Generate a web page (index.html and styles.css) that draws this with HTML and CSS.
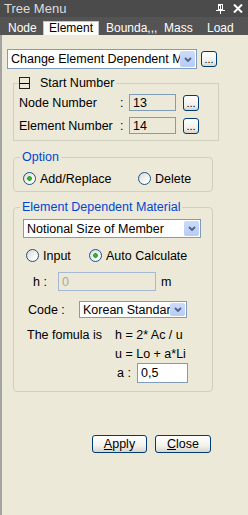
FILE: index.html
```html
<!DOCTYPE html>
<html lang="en">
<head>
    <meta charset="UTF-8">
    <title>Tree Menu</title>
    <link rel="stylesheet" href="styles.css">
</head>
<body>
<div class="titlebar">
    <span class="title">Tree Menu</span>
    <span class="tools">
        <svg width="9" height="10" viewBox="0 0 9 10" shape-rendering="crispEdges">
            <path d="M2.5 0.5h4v5h-4z M3 1h1v4" fill="none" stroke="#fff"/>
            <path d="M0 6.5h9 M4.5 6v4" stroke="#fff"/>
        </svg>
        <svg width="10" height="9" viewBox="0 0 10 9">
            <path d="M1 0.5l8 8 M9 0.5l-8 8" stroke="#fff" stroke-width="2"/>
        </svg>
    </span>
</div>
<div class="tabs">
    <span class="tab node">Node</span>
    <span class="tab elem active">Element</span>
    <span class="tab bound">Bounda,,,</span>
    <span class="tab mass">Mass</span>
    <span class="tab load">Load</span>
</div>

<div class="content">
    <div class="cmd-row">
        <div class="combo cmd">
            <span class="combo-text">Change Element Dependent Material</span>
            <span class="arrow"><svg width="8" height="5" viewBox="0 0 8 5"><path d="M1 1l3 3 3-3" fill="none" stroke="#4d6185" stroke-width="1.8"/></svg></span>
        </div>
        <button class="dots">...</button>
    </div>

    <fieldset class="group start">
        <legend><span class="minus"></span>Start Number</legend>
        <div class="num-row first">
            <span class="num-label">Node Number</span>
            <span class="colon">:</span>
            <input class="num" value="13" readonly>
            <button class="dots">...</button>
        </div>
        <div class="num-row">
            <span class="num-label">Element Number</span>
            <span class="colon">:</span>
            <input class="num" value="14" readonly>
            <button class="dots">...</button>
        </div>
    </fieldset>

    <fieldset class="group round option">
        <legend>Option</legend>
        <div class="radio-row">
            <span class="choice add"><span class="radio on"></span>Add/Replace</span>
            <span class="choice"><span class="radio"></span>Delete</span>
        </div>
    </fieldset>

    <fieldset class="group round material">
        <legend>Element Dependent Material</legend>
        <div class="combo member">
            <span class="combo-text">Notional Size of Member</span>
            <span class="arrow"><svg width="8" height="5" viewBox="0 0 8 5"><path d="M1 1l3 3 3-3" fill="none" stroke="#4d6185" stroke-width="1.8"/></svg></span>
        </div>
        <div class="radio-row calc">
            <span class="choice input"><span class="radio"></span>Input</span>
            <span class="choice"><span class="radio on"></span>Auto Calculate</span>
        </div>
        <div class="h-row">
            <span class="h-label">h :</span>
            <input class="h-input" value="0" disabled>
            <span class="unit">m</span>
        </div>
        <div class="code-row">
            <span class="code-label">Code :</span>
            <div class="combo code">
                <span class="combo-text">Korean Standard</span>
                <span class="arrow"><svg width="8" height="5" viewBox="0 0 8 5"><path d="M1 1l3 3 3-3" fill="none" stroke="#4d6185" stroke-width="1.8"/></svg></span>
            </div>
        </div>
        <div class="formula first">
            <span class="formula-label">The fomula is</span>
            <span>h = 2* Ac / u</span>
        </div>
        <div class="formula second">
            <span class="formula-label"></span>
            <span>u = Lo + a*Li</span>
        </div>
        <div class="a-row">
            <span class="a-label">a :</span>
            <input class="a-input" value="0,5">
        </div>
    </fieldset>

    <div class="actions">
        <button class="btn apply"><u>A</u>pply</button>
        <button class="btn close"><u>C</u>lose</button>
    </div>
</div>
</body>
</html>
```

FILE: styles.css
```css
* {
    box-sizing: border-box;
}

body {
    margin: 0;
    width: 248px;
    height: 515px;
    overflow: hidden;
    background: #ece9d8;
    font-family: "Liberation Sans", Arial, sans-serif;
    font-size: 12.5px;
    color: #000;
}

.titlebar {
    height: 17px;
    background: #4b4b4b;
    color: #dcdcdc;
    display: flex;
    align-items: center;
    padding-left: 4px;
    font-size: 13px;
}

.title {
    flex: 1;
}

.tools {
    display: flex;
    align-items: center;
    gap: 8px;
    padding-right: 5px;
}

.tabs {
    height: 18px;
    background: #545454;
    display: flex;
    align-items: flex-end;
    padding-left: 2px;
}

.tab {
    height: 14px;
    line-height: 14px;
    color: #fff;
    font-size: 12px;
    padding-left: 6px;
    white-space: nowrap;
}

.tab.node { width: 41px; }
.tab.elem { width: 56px; }
.tab.bound { width: 59px; padding-left: 7px; }
.tab.mass { width: 43px; }
.tab.load { flex: 1; }

.tab.active {
    background: #fbfbf8;
    color: #000;
    border: 1px solid #c4c4c4;
    border-bottom: none;
    padding-left: 5px;
    line-height: 13px;
}

.content {
    height: 480px;
    border-left: 2px solid #a3a3a3;
    padding: 14px 0 0 5px;
}

/* combo boxes */
.combo {
    display: flex;
    align-items: stretch;
    background: #fff;
    border: 1px solid #7f9db9;
    padding: 1px;
}

.combo-text {
    flex: 1;
    overflow: hidden;
    white-space: nowrap;
    padding-left: 2px;
    display: flex;
    align-items: center;
}

.arrow {
    width: 15px;
    background: linear-gradient(#cddbfb, #b7cbf5);
    border-radius: 2px;
    display: flex;
    align-items: center;
    justify-content: center;
}

.cmd-row {
    display: flex;
    align-items: center;
    gap: 4px;
}

.combo.cmd {
    width: 190px;
    height: 20px;
}

/* small xp buttons */
button {
    font-family: inherit;
    font-size: inherit;
    color: #000;
    cursor: default;
}

.dots {
    width: 16px;
    height: 16px;
    padding: 0 0 1px;
    border: 1px solid #003c74;
    border-radius: 3px;
    background: linear-gradient(#ffffff, #f0efe8 70%, #d8d4c8);
    font-size: 11px;
    line-height: 1;
    display: flex;
    align-items: flex-end;
    justify-content: center;
}

/* group boxes */
fieldset.group {
    margin: 0 0 0 6px;
    padding: 0;
    border: 1px solid #d0d0bf;
    min-width: 0;
}

fieldset.group legend {
    line-height: 14px;
    height: 14px;
    padding: 0 2px;
    margin-left: 6px;
    color: #0046d5;
}

fieldset.round {
    border-radius: 4px;
}

.start {
    width: 206px;
    margin-top: 7px !important;
    padding-bottom: 6px !important;
}

.start legend {
    margin-left: 5px !important;
    padding: 0 2px 0 0 !important;
    color: #000 !important;
    display: flex;
    align-items: center;
}

.minus {
    width: 11px;
    height: 12px;
    border: 1px solid #222;
    background: linear-gradient(#000, #000) center / 100% 1px no-repeat;
    margin-right: 10px;
}

.num-row {
    display: flex;
    align-items: center;
    height: 17px;
    margin: 6px 0 0 5px;
}

.num-row.first {
    margin-top: 4px;
}

.num-label {
    width: 101px;
}

.colon {
    width: 9px;
}

input {
    font-family: inherit;
    font-size: inherit;
    color: #000;
    outline: none;
}

input.num {
    width: 47px;
    height: 17px;
    border: 1px solid #7f9db9;
    background: #ece9d8;
    padding: 0 3px;
}

.num-row .dots {
    margin-left: 7px;
}

.option {
    width: 200px;
    margin-top: 9px !important;
    padding-bottom: 6px !important;
}

.radio-row {
    display: flex;
    align-items: center;
    height: 13px;
    margin: 8px 0 0 9px;
}

.choice {
    display: flex;
    align-items: center;
}

.choice.add {
    width: 115px;
}

.radio {
    width: 13px;
    height: 13px;
    border: 1px solid #1c5180;
    border-radius: 50%;
    background: linear-gradient(135deg, #d8d8d2, #ffffff 80%);
    margin-right: 4px;
}

.radio.on {
    background: radial-gradient(circle, #3fbf3f 0, #21a121 2px, transparent 2.6px),
                linear-gradient(135deg, #d8d8d2, #ffffff 80%);
}

.material {
    width: 200px;
    margin-top: 8px !important;
    padding-bottom: 8px !important;
}

.combo.member {
    width: 178px;
    height: 19px;
    margin: 5px 0 0 9px;
}

.radio-row.calc {
    margin: 11px 0 0 12px;
}

.choice.input {
    width: 63px;
}

.h-row {
    display: flex;
    align-items: center;
    height: 19px;
    margin: 10px 0 0 19px;
}

.h-label {
    width: 25px;
}

.h-input {
    width: 98px;
    height: 19px;
    border: 1px solid #a5b9d3;
    background: #ece9d8;
    color: #aca899;
    padding: 0 3px;
}

.unit {
    margin-left: 5px;
}

.code-row {
    display: flex;
    align-items: center;
    height: 17px;
    margin: 10px 0 0 14px;
}

.code-label {
    width: 51px;
}

.combo.code {
    width: 108px;
    height: 17px;
    padding: 0 1px;
}

.combo.code .arrow {
    margin: 1px 0;
}

.formula {
    display: flex;
    margin-left: 13px;
}

.formula.first {
    margin-top: 8px;
    line-height: 19px;
}

.formula.second {
    line-height: 18px;
}

.formula-label {
    width: 88px;
}

.a-row {
    display: flex;
    align-items: center;
    height: 20px;
    margin-left: 103px;
}

.a-label {
    width: 20px;
}

.a-input {
    width: 51px;
    height: 20px;
    border: 1px solid #7f9db9;
    background: #fff;
    padding: 0 3px;
}

.actions {
    display: flex;
    margin: 43px 0 0 85px;
    gap: 8px;
}

.btn {
    height: 18px;
    padding: 0;
    border: 1px solid #003c74;
    border-radius: 3px;
    background: linear-gradient(#ffffff, #f3f2ec 60%, #d9d5ca);
    line-height: 14px;
}

.btn.apply {
    width: 55px;
}

.btn.close {
    width: 56px;
}
```
